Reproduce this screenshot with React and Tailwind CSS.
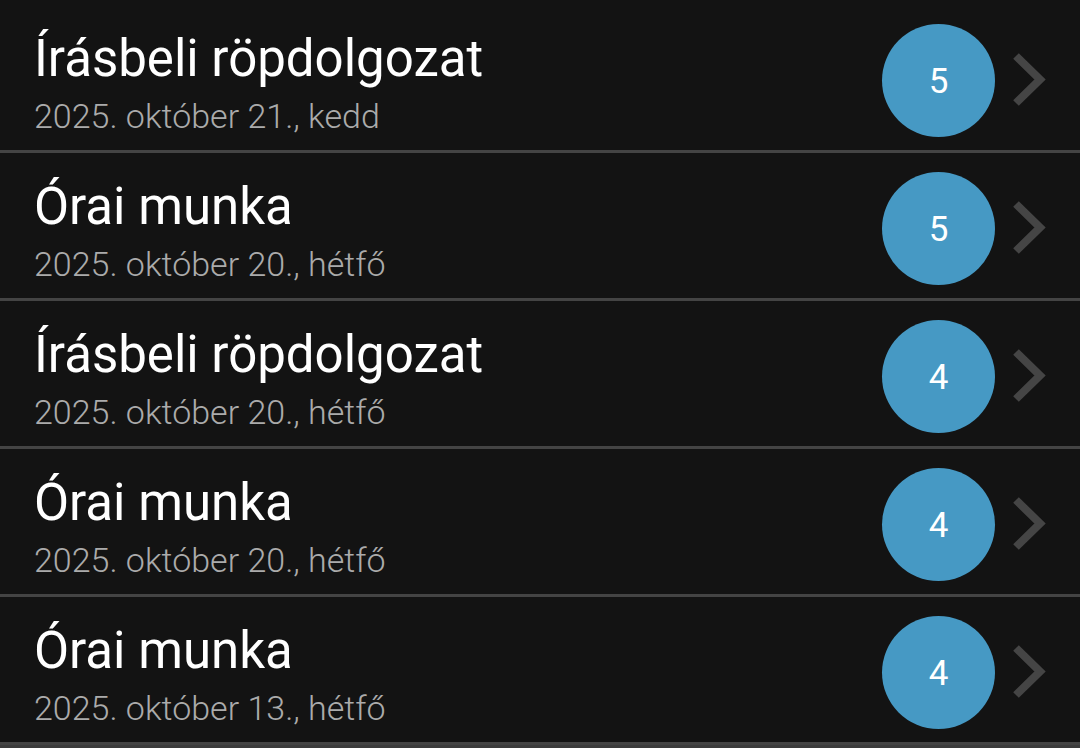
import React from 'react';

const grades = [
    { title: 'Írásbeli röpdolgozat', date: '2025. október 21., kedd', value: 5 },
    { title: 'Órai munka', date: '2025. október 20., hétfő', value: 5 },
    { title: 'Írásbeli röpdolgozat', date: '2025. október 20., hétfő', value: 4 },
    { title: 'Órai munka', date: '2025. október 20., hétfő', value: 4 },
    { title: 'Órai munka', date: '2025. október 13., hétfő', value: 4 },
];

const Chevron = () => (
    <svg width="40" height="60" viewBox="0 0 40 60" className="shrink-0">
        <polyline points="6,6 30,29.5 6,53" fill="none" stroke="#454545" strokeWidth="8" strokeLinecap="butt" strokeLinejoin="miter" />
    </svg>
);

const GradeRow = ({ title, date, value }) => {
    return (
        <div className="flex flex-col">
            <div className="flex h-[145px] items-stretch pl-[34px] pr-[30px]">
                <div className="flex flex-1 flex-col pt-[25px]">
                    <span className="text-[51px] leading-[58px] text-white font-normal">{title}</span>
                    <span className="mt-[6px] text-[34px] leading-[44px] text-[#ababab] font-light">{date}</span>
                </div>
                <div className="flex items-center gap-[15px] pt-[5px]">
                    <div className="flex h-[113px] w-[113px] items-center justify-center rounded-full bg-[#4699c4] pt-[2px]">
                        <span className="text-[35px] leading-none text-white">{value}</span>
                    </div>
                    <Chevron />
                </div>
            </div>
            <div className="h-[3px] bg-[#444444]" />
        </div>
    );
};

export default function App() {
    return (
        <div className="h-[748px] w-[1080px] overflow-hidden bg-[#131313] pt-[5px] font-['Roboto',sans-serif]">
            {grades.map((g, i) => (
                <GradeRow key={i} {...g} />
            ))}
            <div className="h-[3px] bg-[#3c3c3c]" />
        </div>
    );
}
